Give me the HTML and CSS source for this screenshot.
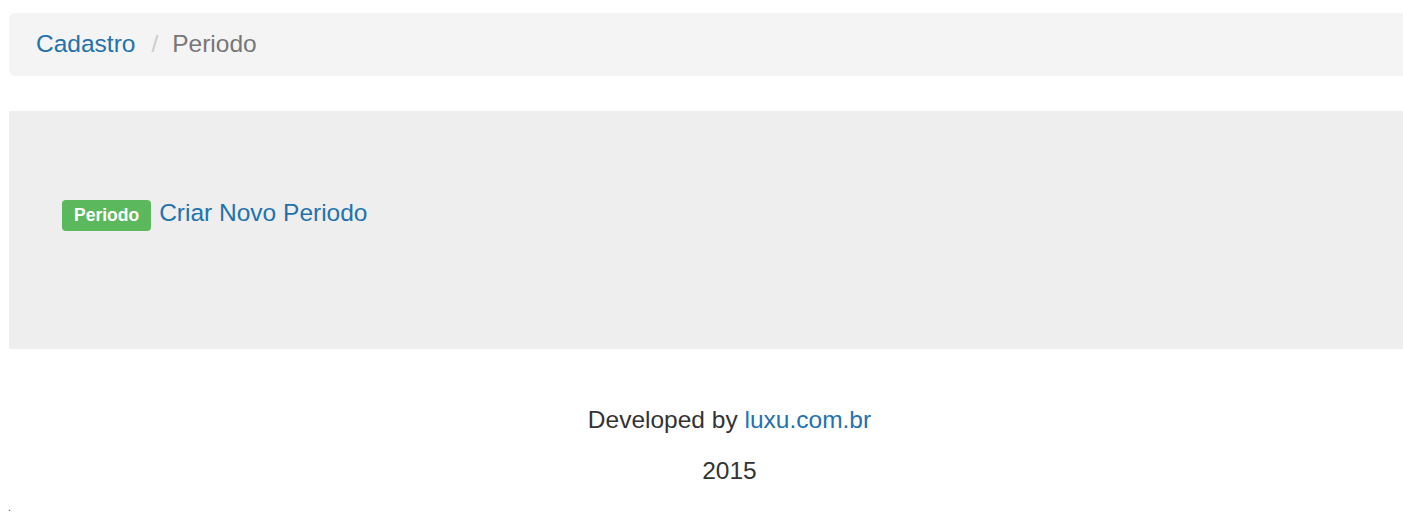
FILE: index.html
```html
<!DOCTYPE html>
<html>
<head>
<meta charset="utf-8">
<link rel="stylesheet" href="styles.css">
</head>
<body>
<div class="container">
  <ol class="breadcrumb">
    <li><a href="#">Cadastro</a></li>
    <li class="sep">/</li>
    <li class="active">Periodo</li>
  </ol>
  <div class="jumbotron">
    <p class="line"><span class="label">Periodo</span><a href="#">Criar Novo Periodo</a></p>
  </div>
  <footer class="footer">
    <p>Developed by <a href="#">luxu.com.br</a></p>
    <p>2015</p>
  </footer>
</div>
<div class="dot">.</div>
</body>
</html>
```
FILE: styles.css
```css
html, body {
  margin: 0;
  padding: 0;
  overflow: hidden;
  background: #fff;
}
body {
  font-family: "Liberation Sans", Arial, sans-serif;
  font-size: 24.5px;
  line-height: 34px;
  color: #333;
  height: 522px;
  position: relative;
}
a {
  color: #2372ae;
  text-decoration: none;
}
.container {
  margin-left: 9px;
  width: 1441px;
  padding-top: 13px;
}
.breadcrumb {
  list-style: none;
  margin: 0 0 35px 0;
  padding: 14px 27px 15px;
  background: #f4f4f4;
  border-radius: 6px;
  display: flex;
}
.breadcrumb li {
  margin: 0;
}
.breadcrumb .sep {
  color: #ccc;
  margin: 0 14px 0 16px;
}
.breadcrumb .active {
  color: #777;
}
.jumbotron {
  background: #eee;
  height: 238px;
  box-sizing: border-box;
  padding: 84px 53px 0;
}
.line {
  margin: 0;
  display: flex;
  align-items: center;
}
.label {
  display: inline-block;
  background: #5cb85c;
  color: #fff;
  font-weight: bold;
  font-size: 17.5px;
  line-height: 17px;
  padding: 7px 12px 7px 12px;
  border-radius: 4px;
  margin-right: 8px;
  margin-top: 5px;
}
.footer {
  text-align: center;
  padding-top: 54px;
}
.footer p {
  margin: 0 0 17px;
}
.dot {
  position: absolute;
  left: 8px;
  top: 500px;
  font-size: 10px;
  line-height: 16px;
  color: #333;
}
```
